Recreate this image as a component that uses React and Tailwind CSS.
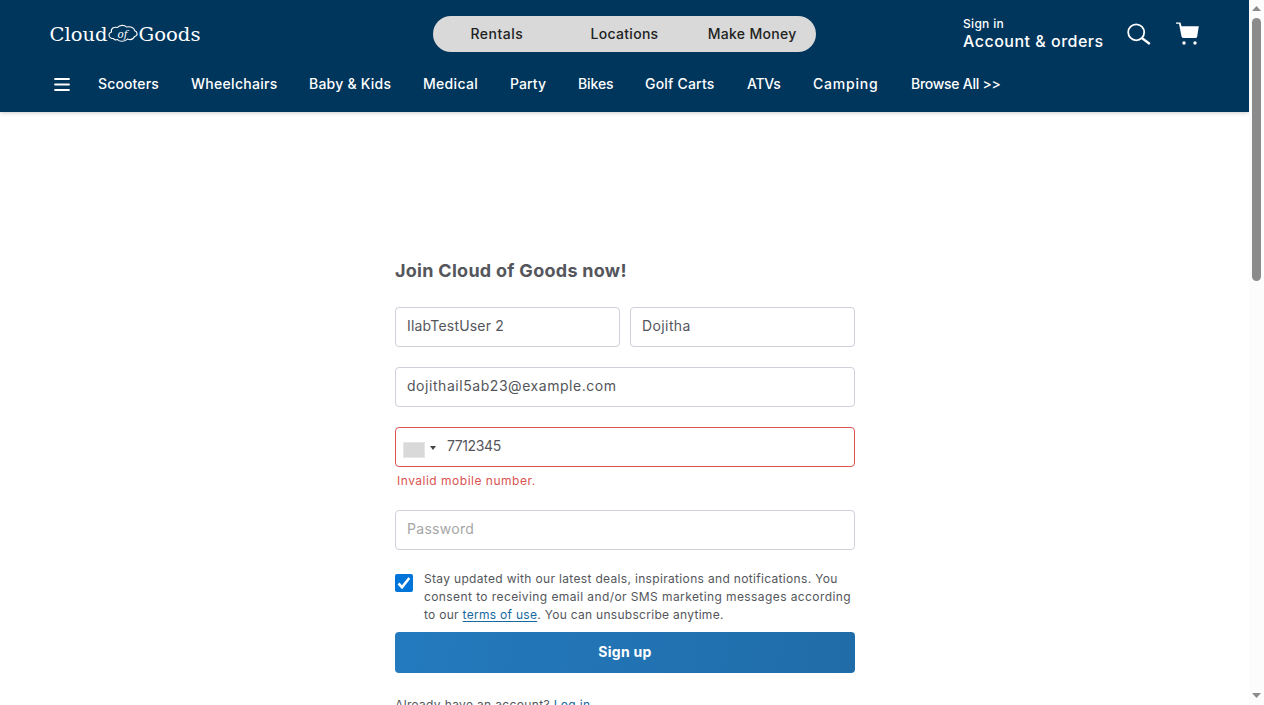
const navItems = [
  { label: 'Scooters', cls: 'w-[61px] tracking-[0.13px]' },
  { label: 'Wheelchairs', cls: 'w-[86px] tracking-[0.3px]' },
  { label: 'Baby & Kids', cls: 'w-[82px] tracking-[0.22px]' },
  { label: 'Medical', cls: 'w-[55px] tracking-[0.3px]' },
  { label: 'Party', cls: 'w-[36px] tracking-[0.1px]' },
  { label: 'Bikes', cls: 'w-[35px] tracking-[-0.1px]' },
  { label: 'Golf Carts', cls: 'w-[70px] tracking-[0.2px]' },
  { label: 'ATVs', cls: 'w-[34px] tracking-[-0.3px]' },
  { label: 'Camping', cls: 'w-[66px] tracking-[0.8px]' },
  { label: 'Browse All >>', cls: 'w-[90px] tracking-[-0.27px]' },
];

function Logo() {
  return (
    <svg className="mt-[22px] h-6 w-[152px] text-white" viewBox="0 0 152 24" fill="currentColor">
      <text x="0.500" y="19" textLength="58" lengthAdjust="spacingAndGlyphs" fontFamily="DejaVu Serif, serif" fontSize="18.5">Cloud</text>
      <path
        d="M64.500 16.500C59.500 16.500 58.500 11.500 62.500 10C61.500 6.500 65 4.500 68.500 5.500C70.500 2.700 75.500 2.700 77.500 5C82 4 85.500 6 85.500 8.500C89 10 89 13.500 85.500 14.500C84 18 80.500 17.800 78.500 17C76 20 70.500 20 68.500 17.500C66.500 18.200 65 17.800 64.500 16.500Z"
        fill="none"
        stroke="currentColor"
        strokeWidth="1.100"
      />
      <text x="68.500" y="16" textLength="10" lengthAdjust="spacingAndGlyphs" fontFamily="DejaVu Serif, serif" fontStyle="italic" fontSize="11">of</text>
      <text x="89.500" y="19" textLength="62" lengthAdjust="spacingAndGlyphs" fontFamily="DejaVu Serif, serif" fontSize="18.5">Goods</text>
    </svg>
  );
}

function Header() {
  return (
    <header className="h-28 bg-[#00355c] text-white shadow-[0_1px_4px_rgba(0,0,0,0.2)]">
      <div className="flex h-14 items-start pl-[49px]">
        <Logo />
        <div className="mt-4 ml-[232px] grid h-9 w-[383px] grid-cols-3 items-center rounded-[18px] bg-[#d9d9d9] text-center text-sm font-medium whitespace-nowrap text-[#222]">
          <span className="tracking-[0.5px]">Rentals</span>
          <span className="tracking-[0.3px]">Locations</span>
          <span className="tracking-[0.3px]">Make Money</span>
        </div>
        <div className="mt-4 ml-[147px] w-[164px] font-medium whitespace-nowrap">
          <div className="text-xs leading-4 tracking-[0.3px]">Sign in</div>
          <div className="text-base leading-[19px] tracking-[0.5px]">Account &amp; orders</div>
        </div>
        <svg className="mt-[22px] h-6 w-6" viewBox="0 0 24 24" fill="none" stroke="currentColor" strokeWidth="1.8">
          <circle cx="9.200" cy="10.300" r="8" />
          <path d="M14.800 16L22.800 22" strokeWidth="2.200" />
        </svg>
        <svg className="mt-[22px] ml-[25px] h-6 w-6" viewBox="0 0 24 24" fill="currentColor">
          <path d="M0 .6H4.500L5.500 4.200H22.800L21.200 14.500Q20.900 16 19.500 16H7.800Q6 16 5.500 14.500L3 1.800H0Z" />
          <circle cx="8" cy="21" r="1.700" />
          <circle cx="19" cy="21" r="1.700" />
        </svg>
      </div>
      <nav className="flex h-14 items-center pl-[54px] text-sm font-medium whitespace-nowrap">
        <svg className="mr-7 h-4 w-4" viewBox="0 0 16 16" stroke="currentColor" strokeWidth="1.800" strokeLinecap="round">
          <path d="M1 3H15M1 8.500H15M1 14H15" />
        </svg>
        <div className="flex gap-8">
          {navItems.map(({ label, cls }) => (
            <span key={label} className={cls}>{label}</span>
          ))}
        </div>
      </nav>
    </header>
  );
}

function Field({ children, className = '' }) {
  return (
    <div className={`h-10 rounded-[4px] border border-[#ced0da] px-[11px] text-sm leading-[36px] ${className}`}>
      {children}
    </div>
  );
}

function SignUpForm() {
  return (
    <main className="ml-[395px] w-[460px] pt-[147px] whitespace-nowrap text-[#54565b]">
      <h1 className="text-lg leading-6 font-bold tracking-[0.28px]">Join Cloud of Goods now!</h1>
      <div className="mt-6 grid grid-cols-2 gap-[10px]">
        <Field className="tracking-[0.2px]">IlabTestUser 2</Field>
        <Field className="tracking-[0.4px]">Dojitha</Field>
      </div>
      <Field className="mt-5 tracking-[0.55px]">dojithail5ab23@example.com</Field>
      <div className="mt-5 flex h-10 rounded-[4px] border border-[#d9534f] pl-[7px] text-sm leading-[36px]">
        <span className="mt-[14px] h-4 w-[22px] border border-[#e6e6e6] bg-[#d9d9d9]" />
        <svg className="mt-[18px] ml-[5px] h-1 w-[6px]" viewBox="0 0 6 4" fill="#444">
          <path d="M0 0H6L3 4Z" />
        </svg>
        <span className="ml-[11px] tracking-[-0.4px]">7712345</span>
      </div>
      <p className="mt-[5px] ml-[2px] text-xs leading-[18px] tracking-[0.5px] text-[#d9534f]">Invalid mobile number.</p>
      <Field className="mt-5 tracking-[0.3px] text-[#a6a6a6]">Password</Field>
      <div className="mt-5 flex h-[54px]">
        <span className="mt-1 flex size-[18px] items-center justify-center rounded-[2px] bg-[#0075d9]">
          <svg className="h-[14px] w-[14px]" viewBox="0 0 14 14" fill="none" stroke="white" strokeWidth="2.600">
            <path d="M1.500 7.500L5 11.200L12.300 2" />
          </svg>
        </span>
        <p className="ml-[11px] text-xs leading-[18px]">
          <span className="tracking-[0.33px]">Stay updated with our latest deals, inspirations and notifications. You</span><br />
          <span className="tracking-[0.41px]">consent to receiving email and/or SMS marketing messages according</span><br />
          <span className="tracking-[0.29px]">to our <a className="text-[#17699f] underline underline-offset-2">terms of use</a>. You can unsubscribe anytime.</span>
        </p>
      </div>
      <button className="mt-2 flex h-[41px] w-full justify-center rounded-[4px] bg-linear-100 from-[#237abe] to-[#206ca8] text-sm leading-10 font-bold tracking-[0.3px] text-white">Sign up</button>
      <p className="mt-[23px] text-xs leading-[18px] tracking-[0.35px]">Already have an account? <a className="text-[#17699f]">Log in</a></p>
    </main>
  );
}

function Scrollbar() {
  return (
    <div className="flex w-[15px] flex-col items-center bg-[#fcfcfc]">
      <svg className="mt-[6px] h-[5px] w-[9px]" viewBox="0 0 9 5" fill="#8b8b8b"><path d="M0 5L4.500 0L9 5Z" /></svg>
      <div className="mt-[7px] h-[263px] w-[9px] rounded-full bg-[#8b8b8b]" />
      <svg className="mt-auto mb-[7px] h-[5px] w-[9px]" viewBox="0 0 9 5" fill="#8b8b8b"><path d="M0 0H9L4.500 5Z" /></svg>
    </div>
  );
}

export default function App() {
  return (
    <div className="flex h-[705px] w-[1264px] overflow-hidden bg-white font-['Inter','Liberation_Sans',sans-serif]">
      <div className="h-full w-[1249px] overflow-hidden">
        <Header />
        <SignUpForm />
      </div>
      <Scrollbar />
    </div>
  );
}
